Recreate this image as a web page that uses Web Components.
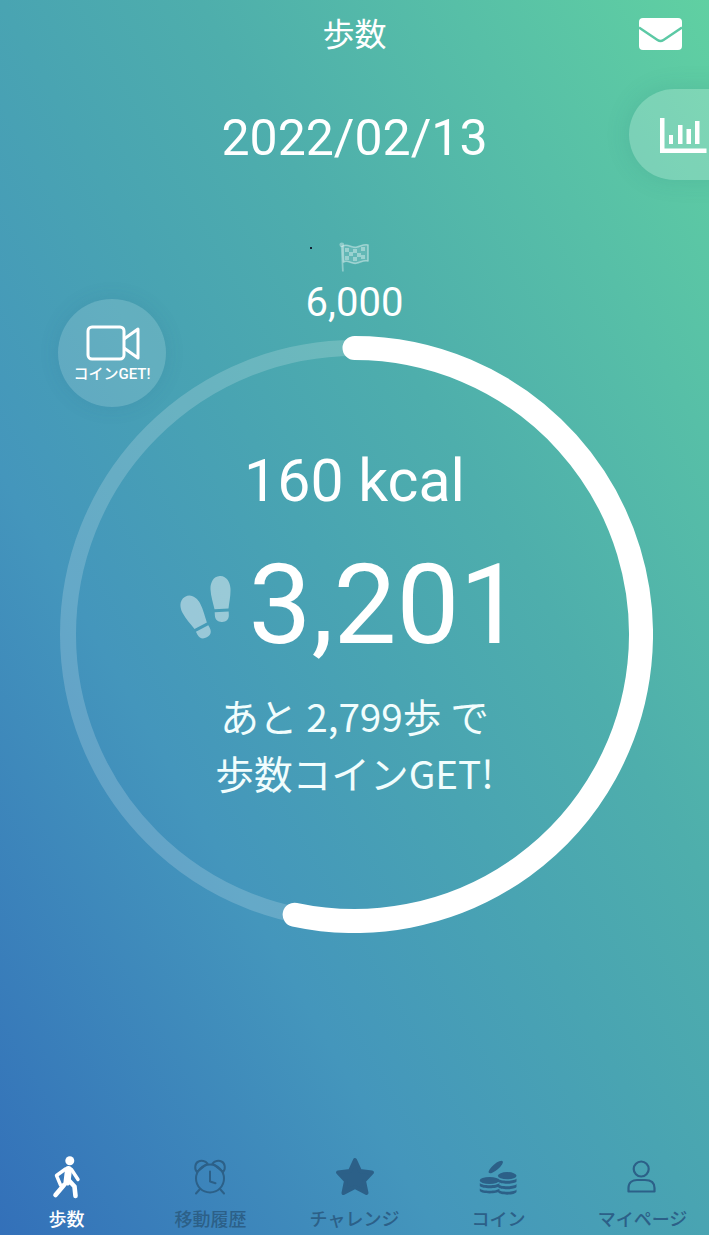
<!DOCTYPE html>
<html lang="ja">
<head>
<meta charset="utf-8">
<title>歩数</title>
<style>
  html, body { margin: 0; padding: 0; }
  body { font-family: Roboto, "Noto Sans CJK JP", sans-serif; color: #fff; }
</style>
</head>
<body>
<step-app>
  <top-header slot="header" data-title="歩数"></top-header>
  <step-ring data-steps="3201" data-goal="6000" data-date="2022/02/13">
    <span slot="kcal">160 kcal</span>
    <span slot="count">3,201</span>
    <span slot="note">あと 2,799歩 で<br>歩数コインGET!</span>
  </step-ring>
  <nav-bar slot="nav">
    <nav-item data-icon="walk" data-active>歩数</nav-item>
    <nav-item data-icon="clock">移動履歴</nav-item>
    <nav-item data-icon="star">チャレンジ</nav-item>
    <nav-item data-icon="coins">コイン</nav-item>
    <nav-item data-icon="user">マイページ</nav-item>
  </nav-bar>
</step-app>

<script>
const JP_FONT = `Roboto, "Noto Sans CJK JP", sans-serif`;

/**
 * Page frame with the gradient
 */
class StepAppElement extends HTMLElement {
  constructor() {
    super();
    this.attachShadow({ mode: "open" }).innerHTML = `
      <style>
        :host {
          display: flex;
          flex-direction: column;
          position: relative;
          width: 709px;
          height: 1235px;
          overflow: hidden;
          color: #fff;
          font-family: ${JP_FONT};
          background: linear-gradient(to top right, #3370b9 0%, #4496bc 31%, #49a4b2 50%, #4eaeac 64%, #60d0a2 100%);
        }
        .fill { flex: 1; }
      </style>
      <slot name="header"></slot>
      <slot></slot>
      <div class="fill"></div>
      <slot name="nav"></slot>
    `;
  }
}

/**
 * Title row with the mail icon and the chart tab
 */
class TopHeaderElement extends HTMLElement {
  constructor() {
    super();
    this.attachShadow({ mode: "open" }).innerHTML = `
      <style>
        :host {
          display: flex;
          justify-content: center;
          align-items: center;
          height: 70px;
          font-size: 32px;
          line-height: 70px;
        }
        .mail {
          position: absolute;
          left: 639px;
          top: 18px;
        }
        .tab {
          position: absolute;
          left: 629px;
          top: 89px;
          width: 100px;
          height: 91px;
          border-radius: 46px 0 0 46px;
          background: rgba(255, 255, 255, 0.2);
          box-shadow: 0 0 24px rgba(40, 110, 120, 0.16);
        }
        .tab svg {
          position: absolute;
          left: 31px;
          top: 29px;
        }
      </style>
      <span class="title"></span>
      <svg class="mail" width="43" height="32" viewBox="0 0 43 32">
        <rect width="43" height="32" rx="4" fill="#fff"/>
        <path d="M0 9.500 L18.500 22 Q21.500 24 24.500 22 L43 9.500" fill="none" stroke="#5cc9a5" stroke-width="2.400"/>
      </svg>
      <div class="tab">
        <svg width="47" height="36" viewBox="0 0 47 36" fill="#fff">
          <path d="M0 0h4.500v30.500H46.500V35H0z"/>
          <rect x="9" y="17" width="4" height="9"/>
          <rect x="18" y="7" width="4.500" height="19"/>
          <rect x="26.500" y="11" width="4.500" height="15"/>
          <rect x="35" y="3" width="4.500" height="23"/>
        </svg>
      </div>
    `;
    this.shadowRoot.querySelector(".title").textContent = this.dataset.title;
  }
}

/**
 * Progress ring with date and goal above it
 * @attribute data-steps
 * @attribute data-goal
 * @attribute data-date
 */
class StepRingElement extends HTMLElement {
  constructor() {
    super();
    const steps = Number(this.dataset.steps);
    const goal = Number(this.dataset.goal);
    const radius = 286.5;
    const center = 298.5;
    const angle = (steps / goal) * Math.PI * 2;
    const endX = center + Math.sin(angle) * radius;
    const endY = center - Math.cos(angle) * radius;
    const large = angle > Math.PI ? 1 : 0;
    const sole = `M0 -23C7 -23 10 -16 10 -10C10 -3 8 4 7 10H-7C-8 4 -10 -3 -10 -10C-10 -16 -7 -23 0 -23Z
      M-7 13H7V16C7 21 4 23 0 23C-4 23 -7 21 -7 16Z`;

    this.attachShadow({ mode: "open" }).innerHTML = `
      <style>
        :host {
          display: flex;
          flex-direction: column;
          align-items: center;
        }
        .date {
          font-size: 50px;
          line-height: 58px;
          margin-top: 39px;
        }
        .goal {
          display: flex;
          flex-direction: column;
          align-items: center;
          margin-top: 75px;
          position: relative;
        }
        .goal span {
          font-size: 40px;
          line-height: 46px;
          margin-top: 8px;
        }
        .dot {
          position: absolute;
          left: 4px;
          top: 5px;
          width: 2px;
          height: 2px;
          background: #123;
        }
        .wheel {
          position: relative;
          width: 597px;
          height: 597px;
          margin-top: 10px;
        }
        .wheel > svg {
          position: absolute;
          inset: 0;
        }
        .inner {
          position: relative;
          display: flex;
          flex-direction: column;
          align-items: center;
          padding-top: 107px;
        }
        .kcal {
          font-size: 59px;
          line-height: 76px;
        }
        .count {
          display: flex;
          align-items: center;
          gap: 17px;
          margin-top: 31px;
          height: 110px;
          font-size: 112px;
          line-height: 110px;
          margin-left: -7px;
        }
        .count svg {
          margin-top: 6px;
        }
        .note {
          font-family: "Noto Sans CJK JP", sans-serif;
          color: #f1fdfd;
          font-size: 38.700px;
          line-height: 57px;
          font-weight: 400;
          text-align: center;
          margin-top: 27px;
          white-space: nowrap;
        }
        .video {
          position: absolute;
          left: 58px;
          top: 299px;
          width: 108px;
          height: 108px;
          border-radius: 50%;
          background: rgba(255, 255, 255, 0.15);
          box-shadow: 0 0 20px rgba(40, 90, 130, 0.12);
          display: flex;
          flex-direction: column;
          align-items: center;
          box-sizing: border-box;
          padding-top: 26px;
        }
        .video svg {
          margin-left: 2px;
        }
        .video b {
          font-size: 15px;
          line-height: 16px;
          font-weight: 500;
          margin-top: 5px;
          white-space: nowrap;
        }
      </style>
      <div class="date">${this.dataset.date}</div>
      <div class="goal">
        <svg width="30" height="30" viewBox="0 0 30 30">
          <g fill="#fff" fill-opacity="0.36">
            <circle cx="2.800" cy="2.800" r="2.400"/>
            <path d="M1.800 4h1.800l1.200 25.500H3z"/>
            <path d="M6 6h4v4H6zM14 7h4v4h-4zM22 5h4v4h-4zM10 10h4v4h-4zM18 11h4v4h-4zM6 14h4v4H6zM14 15h4v4h-4zM22 13h4v4h-4z"/>
          </g>
          <path d="M4 4C9 1 13 7 18 5C22 4 25 2 29 3V19C25 18 22 20 18 21C13 23 9 17 4.500 20Z" fill="#fff" fill-opacity="0.12" stroke="#fff" stroke-opacity="0.42" stroke-width="1.600" stroke-linejoin="round"/>
        </svg>
        <span>${goal.toLocaleString("en-US")}</span>
        <i class="dot"></i>
      </div>
      <div class="wheel">
        <svg width="597" height="597" viewBox="0 0 597 597" fill="none">
          <circle cx="${center}" cy="${center}" r="${radius}" stroke="#fff" stroke-opacity="0.18" stroke-width="16"/>
          <path d="M${center} ${center - radius} A${radius} ${radius} 0 ${large} 1 ${endX} ${endY}" stroke="#fff" stroke-width="24" stroke-linecap="round"/>
        </svg>
        <div class="inner">
          <div class="kcal"><slot name="kcal"></slot></div>
          <div class="count">
            <svg width="52" height="64" viewBox="0 0 52 64" fill="#fff" fill-opacity="0.45">
              <path transform="translate(41 23) rotate(-3)" d="${sole}"/>
              <path transform="translate(16 41) rotate(-28)" d="${sole}"/>
            </svg>
            <slot name="count"></slot>
          </div>
          <div class="note"><slot name="note"></slot></div>
        </div>
      </div>
      <div class="video">
        <svg width="54" height="36" viewBox="0 0 54 36" fill="none" stroke="#fff" stroke-width="3" stroke-linejoin="round">
          <rect x="2" y="2" width="36" height="32" rx="4"/>
          <path d="M38 14 L52 4 V33 L38 23"/>
        </svg>
        <b>コインGET!</b>
      </div>
    `;
  }
}

/**
 * Bottom navigation row
 */
class NavBarElement extends HTMLElement {
  constructor() {
    super();
    this.attachShadow({ mode: "open" }).innerHTML = `
      <style>
        :host {
          display: grid;
          grid-template-columns: repeat(5, 144px);
          justify-content: center;
          padding-bottom: 3px;
        }
      </style>
      <slot></slot>
    `;
  }
}

const NAV_ICONS = {
  walk: `
    <circle cx="26.800" cy="6.700" r="4.500" fill="#fff"/>
    <g fill="none" stroke="#fff" stroke-linecap="round" stroke-linejoin="round">
      <path d="M25.500 15.500L24 28" stroke-width="7"/>
      <path d="M28.500 15.500L35 25.500" stroke-width="3.400"/>
      <path d="M22.500 15L13.500 21.500L17.500 31" stroke-width="3.400"/>
      <path d="M21 31L12.500 41" stroke-width="4.600"/>
      <path d="M25.500 26L31.500 32.500L32.500 42" stroke-width="4.600"/>
    </g>`,
  clock: `
    <g fill="none" stroke="currentColor" stroke-width="2" stroke-linecap="round" stroke-linejoin="round">
      <circle cx="23" cy="24.500" r="14"/>
      <path d="M23 17.500v10l5.500 1.800"/>
      <path d="M10 18c-3-3-2-9 1.500-10.500 3-1.500 7-.5 9 2zM36 18c3-3 2-9-1.500-10.500-3-1.500-7-.5-9 2zM13 35l-4 4.500M33 35l4 4.500"/>
    </g>`,
  star: `
    <path fill="currentColor" stroke="currentColor" stroke-width="4" stroke-linejoin="round"
      d="M24 6L29 17L41 18.500L33 27L35.500 39L24 33L12.500 39L15 27L7 18.500L19 17Z"/>`,
  coins: `
    <g fill="currentColor">
      <ellipse cx="20.800" cy="13" rx="9" ry="3" transform="rotate(-40 20.800 13)"/>
      <ellipse cx="14.500" cy="26.500" rx="9.800" ry="3.400"/>
      <path d="M4.800 29c2 3 17.500 3 19.600 0v3c-2 3-17.500 3-19.600 0zM4.800 34.500c2 3 17.500 3 19.600 0v2.500c-2 3.200-17.500 3.200-19.600 0z"/>
      <ellipse cx="32.200" cy="21.700" rx="9.300" ry="3.600"/>
      <path d="M22.900 24.500c2 3 16.600 3 18.600 0v3c-2 3-16.600 3-18.600 0zM22.900 30c2 3 16.600 3 18.600 0v3c-2 3-16.600 3-18.600 0zM22.900 35.500c2 3 16.600 3 18.600 0v2.500c-2 3.500-16.600 3.500-18.600 0z"/>
    </g>`,
  user: `
    <g fill="none" stroke="currentColor" stroke-width="2.200" stroke-linejoin="round">
      <circle cx="22.200" cy="15" r="7.500"/>
      <path d="M9.500 37.500V34C9.500 28 14 26 18 26H26C31 26 35.500 28 35.500 34V37.500Z"/>
    </g>`
};

/**
 * Bottom navigation item
 * @attribute data-icon
 * @attribute data-active
 */
class NavItemElement extends HTMLElement {
  constructor() {
    super();
    this.attachShadow({ mode: "open" }).innerHTML = `
      <style>
        :host {
          display: flex;
          flex-direction: column;
          align-items: center;
          color: #2c6088;
          font-size: 18px;
          font-weight: 500;
          line-height: 24px;
          white-space: nowrap;
        }
        :host([data-active]) {
          color: #fff;
        }
        svg {
          display: block;
          margin-bottom: 6px;
        }
      </style>
      <svg width="48" height="48" viewBox="0 0 48 48">${NAV_ICONS[this.dataset.icon]}</svg>
      <slot></slot>
    `;
  }
}

window.customElements.define("step-app", StepAppElement);
window.customElements.define("top-header", TopHeaderElement);
window.customElements.define("step-ring", StepRingElement);
window.customElements.define("nav-bar", NavBarElement);
window.customElements.define("nav-item", NavItemElement);
</script>
</body>
</html>
